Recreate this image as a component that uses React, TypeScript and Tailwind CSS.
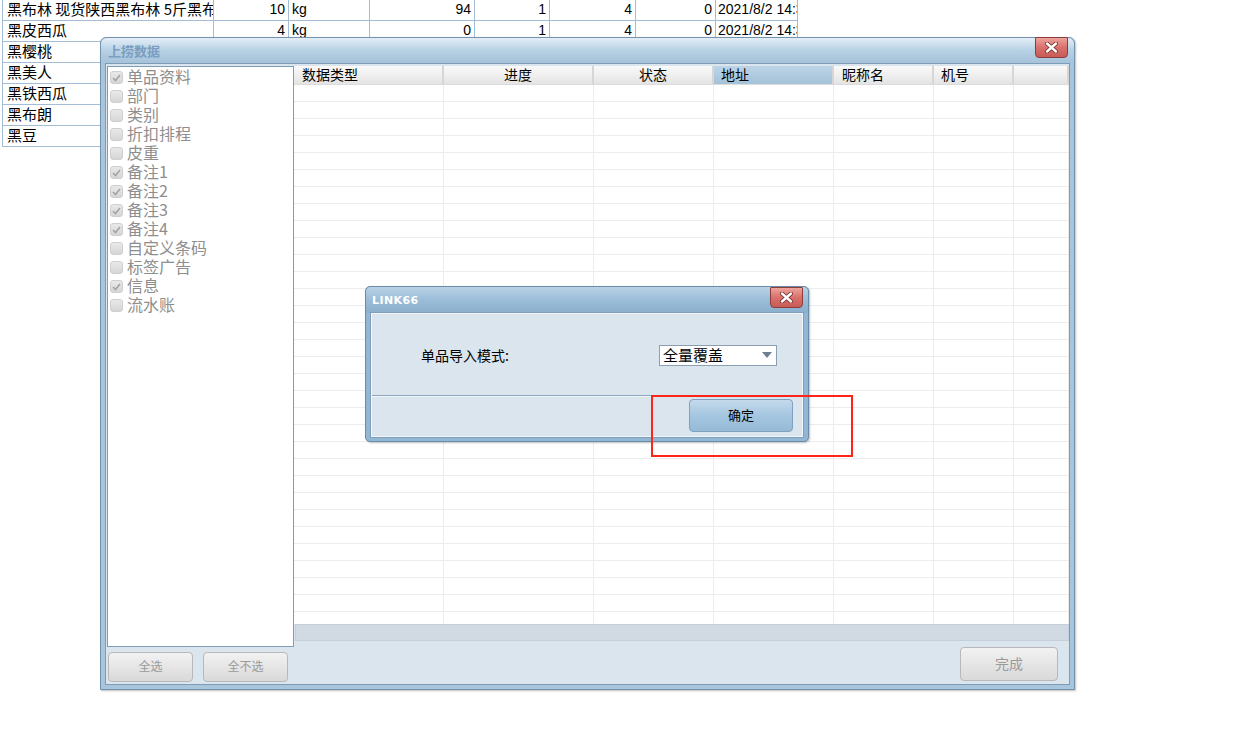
import React from 'react'

const cjk = "font-['Noto_Sans_CJK_SC','Noto_Sans',sans-serif]"

// 背景表格的数据
const bgRows = [
  ['黑布林 现货陕西黑布林 5斤黑布林', '10', 'kg', '94', '1', '4', '0', '2021/8/2 14:30'],
  ['黑皮西瓜', '4', 'kg', '0', '1', '4', '0', '2021/8/2 14:30'],
  ['黑樱桃', '1', 'kg', '0', '1', '4', '0', '2021/8/2 14:30'],
  ['黑美人', '1', 'kg', '0', '1', '4', '0', '2021/8/2 14:30'],
  ['黑铁西瓜', '1', 'kg', '0', '1', '4', '0', '2021/8/2 14:30'],
  ['黑布朗', '1', 'kg', '0', '1', '4', '0', '2021/8/2 14:30'],
  ['黑豆', '1', 'kg', '0', '1', '4', '0', '2021/8/2 14:30'],
]

const bgCols = [
  { w: 'w-[211px]', align: 'justify-start pl-[4px]', font: 'text-[15px]' },
  { w: 'w-[75px]', align: 'justify-end pr-[3px]', font: 'text-[14px]' },
  { w: 'w-[81px]', align: 'justify-start pl-[3px]', font: 'text-[14px]' },
  { w: 'w-[105px]', align: 'justify-end pr-[3px]', font: 'text-[14px]' },
  { w: 'w-[75px]', align: 'justify-end pr-[3px]', font: 'text-[14px]' },
  { w: 'w-[86px]', align: 'justify-end pr-[3px]', font: 'text-[14px]' },
  { w: 'w-[80px]', align: 'justify-end pr-[3px]', font: 'text-[14px]' },
  { w: 'w-[82px]', align: 'justify-start pl-[2px]', font: 'text-[14px]' },
]

const listItems = [
  { label: '单品资料', checked: true },
  { label: '部门', checked: false },
  { label: '类别', checked: false },
  { label: '折扣排程', checked: false },
  { label: '皮重', checked: false },
  { label: '备注1', checked: true },
  { label: '备注2', checked: true },
  { label: '备注3', checked: true },
  { label: '备注4', checked: true },
  { label: '自定义条码', checked: false },
  { label: '标签广告', checked: false },
  { label: '信息', checked: true },
  { label: '流水账', checked: false },
]

const gridCols = [
  { label: '数据类型', w: 'w-[150px]', align: 'justify-start pl-[8px]', active: false },
  { label: '进度', w: 'w-[150px]', align: 'justify-center', active: false },
  { label: '状态', w: 'w-[120px]', align: 'justify-center', active: false },
  { label: '地址', w: 'w-[120px]', align: 'justify-start pl-[7px]', active: true },
  { label: '昵称名', w: 'w-[100px]', align: 'justify-start pl-[8px]', active: false },
  { label: '机号', w: 'w-[80px]', align: 'justify-start pl-[7px]', active: false },
  { label: '', w: 'flex-1', align: 'justify-start', active: false },
]

function CloseButton() {
  return (
    <div className="w-[33px] h-[21px] flex items-center justify-center rounded-b-[4px] rounded-t-[1px] border border-[#8c3d39] bg-gradient-to-b from-[#eda39e] via-[#d9706b] to-[#c85b55]">
      <svg width="13" height="11" viewBox="0 0 13 11">
        <path d="M2 1.5 L11 9.5 M11 1.5 L2 9.5" stroke="#6e2a27" strokeWidth="4" strokeLinecap="round" />
        <path d="M2 1.5 L11 9.5 M11 1.5 L2 9.5" stroke="#ffffff" strokeWidth="2.4" strokeLinecap="round" />
      </svg>
    </div>
  )
}

function Checkbox({ checked }: { checked: boolean }) {
  return (
    <div className="w-[13px] h-[13px] shrink-0 rounded-[3px] border border-[#cfcfcf] bg-gradient-to-b from-[#e9e9e9] to-[#d6d6d6] flex items-center justify-center">
      {checked && (
        <svg width="9" height="8" viewBox="0 0 9 8">
          <path d="M1 4 L3.5 6.5 L8 1" stroke="#a3a3a3" strokeWidth="1.6" fill="none" />
        </svg>
      )}
    </div>
  )
}

function DisabledButton({ label, className }: { label: string; className: string }) {
  return (
    <div
      className={`${className} flex items-center justify-center pb-[2px] rounded-[4px] border border-[#b8b8b8] bg-gradient-to-b from-[#f2f2f2] to-[#d9d9d9] text-[#9a9a9a] leading-none ${cjk}`}
    >
      {label}
    </div>
  )
}

export default function App() {
  return (
    <div className={`relative w-[1254px] h-[732px] bg-white overflow-hidden ${cjk}`}>
      {/* 背景表格 */}
      <div className="flex flex-col ml-[2px] border-l border-[#a3bdd6] w-fit">
        {bgRows.map((row, i) => (
          <div key={i} className="flex h-[21px] border-b border-[#a3bdd6]">
            {row.map((cell, j) => (
              <div
                key={j}
                className={`${bgCols[j].w} ${bgCols[j].align} ${bgCols[j].font} flex items-center pb-[3px] border-r border-[#a3bdd6] overflow-hidden whitespace-nowrap text-black leading-none ${j === 0 ? cjk : "font-['Liberation_Sans','Noto_Sans_CJK_SC',sans-serif]"}`}
              >
                {cell}
              </div>
            ))}
          </div>
        ))}
      </div>

      {/* 上捞数据 窗口 */}
      <div className="absolute left-[100px] top-[37px] w-[975px] h-[653px] flex flex-col rounded-t-[6px] border border-[#7292ae] bg-[#a9c5dc] shadow-[1px_1px_2px_rgba(0,0,0,0.25)]">
        <div className="h-[25px] shrink-0 flex items-center justify-between pl-[7px] pr-[6px] rounded-t-[6px] bg-gradient-to-b from-[#e4eef7] via-[#b6d0e4] to-[#a6c3da]">
          <span className="text-[13px] font-bold text-[#7b9dbf] leading-none">上捞数据</span>
          <div className="self-start -mt-[1px]">
            <CloseButton />
          </div>
        </div>
        <div className="flex-1 px-[4px] pb-[4px] flex">
          <div className="flex-1 flex border border-[#7d9cb8] bg-[#dbe5ee] pl-[1px] pt-[2px]">
            {/* 左侧列表 */}
            <div className="flex flex-col w-[187px]">
              <div className="h-[581px] border border-[#7f9db9] bg-white pt-[1px] flex flex-col">
                {listItems.map((item) => (
                  <div key={item.label} className="h-[19px] flex items-center pl-[2px] gap-[4px]">
                    <Checkbox checked={item.checked} />
                    <span className="text-[16px] text-[#8e8e8e] leading-none whitespace-nowrap -mt-[3px]">{item.label}</span>
                  </div>
                ))}
              </div>
              <div className="flex gap-[10px] mt-[5px] pl-[1px]">
                <DisabledButton label="全选" className="w-[85px] h-[30px] text-[12px]" />
                <DisabledButton label="全不选" className="w-[85px] h-[30px] text-[12px]" />
              </div>
            </div>

            {/* 右侧表格 */}
            <div className="flex flex-col w-[775px]">
              <div className="h-[575px] flex flex-col bg-white overflow-hidden">
                <div className="h-[19px] shrink-0 flex border-b border-[#dcdcdc]">
                  {gridCols.map((col, i) => (
                    <div
                      key={i}
                      className={`${col.w} ${col.align} flex items-center pb-[2px] border-r-2 border-[#d6d6d6] text-[14px] text-black leading-none ${col.active ? 'bg-gradient-to-b from-[#bcd4e7] to-[#a4c2d9]' : 'bg-gradient-to-b from-[#fafafa] to-[#e4e4e4]'}`}
                    >
                      {col.label}
                    </div>
                  ))}
                </div>
                <div className="flex-1 overflow-hidden flex flex-col">
                  {Array.from({ length: 32 }).map((_, r) => (
                    <div key={r} className="h-[17px] shrink-0 flex border-b border-[#ececec]">
                      {gridCols.map((col, i) => (
                        <div key={i} className={`${col.w} border-r border-[#ececec]`} />
                      ))}
                    </div>
                  ))}
                </div>
                <div className="h-[17px] shrink-0 bg-[#dbe5ee] pl-[1px]">
                  <div className="h-full border border-[#c3cfda] bg-[#d1dae3]" />
                </div>
              </div>
              <div className="flex justify-end mt-[6px] pr-[11px]">
                <DisabledButton label="完成" className="w-[98px] h-[34px] text-[14px]" />
              </div>
            </div>
          </div>
        </div>
      </div>

      {/* LINK66 弹窗 */}
      <div className="absolute left-[365px] top-[286px] w-[444px] h-[156px] flex flex-col rounded-[5px] border border-[#6a8cab] bg-[#93b6d2] shadow-[1px_1px_2px_rgba(0,0,0,0.25)]">
        <div className="h-[26px] shrink-0 flex items-center justify-between pl-[6px] pr-[5px] rounded-t-[5px] bg-gradient-to-b from-[#b9d2e6] via-[#9bbdd7] to-[#89afcd]">
          <span className="text-[11px] font-bold text-white leading-none font-['DejaVu_Sans',sans-serif] tracking-[0.4px]">LINK66</span>
          <div className="self-start">
            <CloseButton />
          </div>
        </div>
        <div className="flex-1 px-[5px] pb-[4px] flex">
          <div className="flex-1 flex flex-col border border-[#f2f6fa] bg-[#dbe5ee] outline outline-1 outline-[#7f9fbd]">
            <div className="h-[82px] flex items-center border-b border-[#8aa6c0] pl-[49px]">
              <span className="text-[14px] text-black leading-none">单品导入模式:</span>
              <div className="ml-auto mr-[25px] mt-[1px] w-[118px] h-[21px] bg-white border border-[#8b9fb2] flex items-center pl-[3px] pr-[4px] pb-[2px]">
                <span className="text-[15px] text-black leading-none">全量覆盖</span>
                <svg className="ml-auto mt-[2px]" width="10" height="6" viewBox="0 0 10 6">
                  <polygon points="0,0 10,0 5,6" fill="#6f7f8f" />
                </svg>
              </div>
            </div>
            <div className="flex-1 flex justify-end items-start pt-[2px] pr-[9px] border-t border-[#f2f6fa]">
              <div className="w-[104px] h-[33px] flex items-center justify-center pb-[2px] rounded-[4px] border border-[#7fa1bf] bg-gradient-to-b from-[#c4daec] via-[#a5c6e0] to-[#95bad7] text-[13px] text-black leading-none">
                确定
              </div>
            </div>
          </div>
        </div>
      </div>

      {/* 红框标注 */}
      <div className="absolute left-[651px] top-[395px] w-[202px] h-[62px] border-2 border-[#ff2418]" />
    </div>
  )
}
